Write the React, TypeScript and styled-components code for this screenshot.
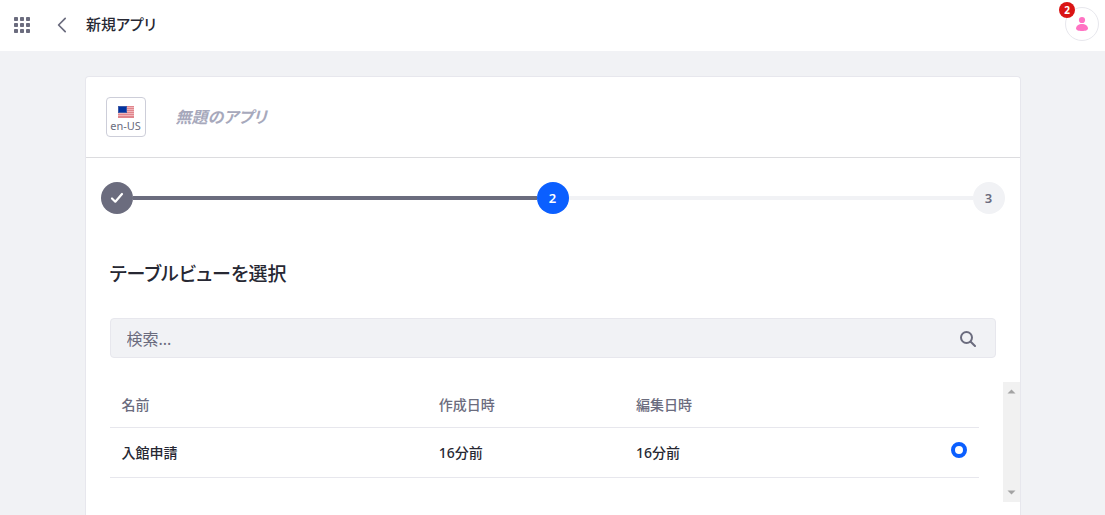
import React from "react";
import styled, { createGlobalStyle } from "styled-components";

const color = {
  dark: "#272833",
  secondary: "#6b6c7e",
  muted: "#a7a9bc",
  light: "#f1f2f5",
  border: "#e7e7ed",
  primary: "#0b5fff",
  danger: "#da1414",
};

const GlobalStyle = createGlobalStyle`
  *, *::before, *::after { box-sizing: border-box; }
  body {
    margin: 0;
    background: ${color.light};
    color: ${color.dark};
    font-family: "Noto Sans", "Noto Sans CJK JP", sans-serif;
    font-feature-settings: "palt";
    font-size: 14px;
    line-height: 20px;
  }
  button, input { font: inherit; font-feature-settings: inherit; color: inherit; }
`;

const Page = styled.div`
  min-height: 100vh;
  display: flex;
  flex-direction: column;
`;

const TopBar = styled.header`
  display: flex;
  align-items: center;
  height: 51px;
  padding: 0 6px 2px;
  background: #fff;
`;

const IconButton = styled.button`
  display: flex;
  align-items: center;
  justify-content: center;
  width: 32px;
  height: 32px;
  padding: 0;
  border: 0;
  background: none;
  color: ${color.secondary};
`;

const BackLink = styled.a`
  display: flex;
  align-items: center;
  justify-content: center;
  width: 32px;
  height: 32px;
  margin-left: 8px;
  color: ${color.secondary};
`;

const PageTitle = styled.h1`
  flex: 1;
  margin: 0 0 0 8px;
  padding-bottom: 2px;
  font-size: 15px;
  font-weight: 500;
  line-height: 24px;
`;

const Avatar = styled.button`
  position: relative;
  display: flex;
  align-items: center;
  justify-content: center;
  width: 34px;
  height: 34px;
  padding: 0;
  margin-bottom: 2px;
  border: 1px solid ${color.border};
  border-radius: 50%;
  background: #fff;
`;

const Badge = styled.span`
  position: absolute;
  top: -6px;
  left: -7px;
  width: 16px;
  height: 16px;
  border-radius: 50%;
  background: ${color.danger};
  color: #fff;
  font-size: 10px;
  font-weight: 700;
  line-height: 16px;
  text-align: center;
`;

const Main = styled.main`
  flex: 1;
  display: flex;
  flex-direction: column;
  width: 100%;
  max-width: 936px;
  margin: 25px auto 0;
`;

const Card = styled.div`
  flex: 1;
  border: 1px solid ${color.border};
  border-bottom: 0;
  border-radius: 4px 4px 0 0;
  background: #fff;
`;

const CardHeader = styled.div`
  display: flex;
  align-items: center;
  gap: 30px;
  padding: 20px;
  border-bottom: 1px solid #dcdcdf;
`;

const LocaleButton = styled.button`
  display: flex;
  flex-direction: column;
  align-items: center;
  justify-content: center;
  gap: 1px;
  width: 40px;
  height: 40px;
  padding: 4px 0 0;
  border: 1px solid #cdced9;
  border-radius: 4px;
  background: #fff;
  color: ${color.secondary};
  font-size: 11px;
  line-height: 14px;
`;

const AppName = styled.input`
  flex: 1;
  min-width: 0;
  height: 40px;
  padding: 0;
  border: 0;
  outline: 0;
  background: none;
  font-size: 16px;
  font-style: italic;
  font-weight: 700;
  &::placeholder { color: ${color.muted}; opacity: 1; }
`;

const Steps = styled.ol`
  display: flex;
  align-items: center;
  margin: 0;
  padding: 24px 15px;
  list-style: none;
`;

type StepState = "done" | "active" | "todo";
const stepBackground = { done: color.secondary, active: color.primary, todo: color.light };

const Step = styled.li<{ $state: StepState }>`
  display: flex;
  align-items: center;
  flex: 1;
  &:last-child { flex: none; }
  &:not(:last-child)::after {
    content: "";
    flex: 1;
    height: 4px;
    background: ${(p) => (p.$state === "done" ? color.secondary : color.light)};
  }
`;

const StepDot = styled.span<{ $state: StepState }>`
  display: flex;
  align-items: center;
  justify-content: center;
  width: 32px;
  height: 32px;
  border-radius: 50%;
  background: ${(p) => stepBackground[p.$state]};
  color: ${(p) => (p.$state === "todo" ? color.secondary : "#fff")};
  font-size: 13px;
  font-weight: 600;
`;

const StepHeading = styled.h2`
  margin: 0;
  padding: 20px 24px 28px;
  font-size: 19px;
  font-weight: 500;
  line-height: 32px;
`;

const SearchBox = styled.form`
  display: flex;
  align-items: center;
  height: 40px;
  margin: 0 24px 24px;
  padding: 2px 11px 0 16px;
  border: 1px solid ${color.border};
  border-radius: 4px;
  background: ${color.light};
`;

const SearchInput = styled.input`
  flex: 1;
  min-width: 0;
  padding: 0;
  border: 0;
  outline: 0;
  background: none;
  font-size: 16px;
  line-height: 24px;
  &::placeholder { color: ${color.secondary}; opacity: 1; }
`;

const ScrollArea = styled.div`
  display: flex;
  gap: 24px;
  height: 120px;
  padding-left: 24px;
`;

const TableWrap = styled.div`
  flex: 1;
`;

const Table = styled.table`
  width: 100%;
  table-layout: fixed;
  border-collapse: separate;
  border-spacing: 0;
`;

const Th = styled.th<{ $width?: string }>`
  width: ${(p) => p.$width ?? "auto"};
  height: 46px;
  padding: 0 12px;
  border-bottom: 1px solid ${color.border};
  color: ${color.secondary};
  font-weight: 500;
  text-align: left;
`;

const Td = styled.td<{ $end?: boolean }>`
  height: 50px;
  padding: 0 12px;
  border-bottom: 1px solid ${color.border};
  font-weight: 500;
  text-align: ${(p) => (p.$end ? "right" : "left")};
`;

const Radio = styled.input`
  appearance: none;
  display: inline-block;
  width: 16px;
  height: 16px;
  margin: 0;
  border: 4px solid ${color.primary};
  border-radius: 50%;
  background: #fff;
`;

const ScrollTrack = styled.div`
  display: flex;
  flex-direction: column;
  justify-content: space-between;
  align-items: center;
  width: 17px;
  padding: 7px 0;
  background: #f1f1f1;
`;

function AppsIcon() {
  return (
    <svg width="16" height="16" viewBox="0 0 16 16" fill="currentColor" aria-hidden="true">
      {[0, 6, 12].map((y) =>
        [0, 6, 12].map((x) => <rect key={`${x}-${y}`} x={x} y={y} width="4" height="4" rx="0.8" />)
      )}
    </svg>
  );
}

function FlagIcon() {
  return (
    <svg width="16" height="12" viewBox="0 0 16 12" aria-hidden="true">
      <rect width="16" height="12" fill="#f0b4b9" />
      {[0, 2, 4, 6, 8, 10].map((y) => (
        <rect key={y} y={y} width="16" height="1" fill="#e0858c" />
      ))}
      <rect y="11" width="16" height="1" fill="#e0858c" />
      <rect width="9" height="7" fill="#3d58a5" />
      <rect x="1" y="1" width="7" height="5" fill="#0033a0" />
    </svg>
  );
}

const columns = [
  { label: "名前", width: "36.5%" },
  { label: "作成日時", width: "22.7%" },
  { label: "編集日時" },
];

const rows = [{ name: "入館申請", created: "16分前", edited: "16分前" }];

export default function App() {
  return (
    <>
      <GlobalStyle />
      <Page>
        <TopBar>
          <IconButton type="button" aria-label="メニュー">
            <AppsIcon />
          </IconButton>
          <BackLink href="#" aria-label="戻る">
            <svg width="10" height="16" viewBox="0 0 10 16" fill="none" stroke="currentColor" strokeWidth="1.7" strokeLinecap="round" strokeLinejoin="round" aria-hidden="true">
              <path d="M8.2 1.3 1.6 8l6.6 6.7" />
            </svg>
          </BackLink>
          <PageTitle>新規アプリ</PageTitle>
          <Avatar type="button" aria-label="ユーザー">
            <svg width="16" height="16" viewBox="0 0 16 16" fill="#ff73c3" aria-hidden="true">
              <circle cx="8" cy="4" r="3.1" />
              <path d="M2 12.6C2 9.9 4.7 8 8 8s6 1.9 6 4.6c0 1.7-2.6 2.5-6 2.5s-6-.8-6-2.5Z" />
            </svg>
            <Badge>2</Badge>
          </Avatar>
        </TopBar>
        <Main>
          <Card>
            <CardHeader>
              <LocaleButton type="button">
                <FlagIcon />
                en-US
              </LocaleButton>
              <AppName type="text" aria-label="アプリ名" placeholder="無題のアプリ" />
            </CardHeader>
            <Steps>
              <Step $state="done">
                <StepDot $state="done">
                  <svg width="14" height="12" viewBox="0 0 14 12" fill="none" stroke="currentColor" strokeWidth="2.2" strokeLinecap="round" strokeLinejoin="round" role="img" aria-label="完了">
                    <path d="M2 6.5 5.3 9.7 12 2" />
                  </svg>
                </StepDot>
              </Step>
              <Step $state="active" aria-current="step">
                <StepDot $state="active">2</StepDot>
              </Step>
              <Step $state="todo">
                <StepDot $state="todo">3</StepDot>
              </Step>
            </Steps>
            <StepHeading>テーブルビューを選択</StepHeading>
            <SearchBox role="search">
              <SearchInput type="text" aria-label="検索" placeholder="検索..." />
              <IconButton type="submit" aria-label="検索を実行">
                <svg width="16" height="16" viewBox="0 0 16 16" fill="none" stroke="currentColor" strokeWidth="2" strokeLinecap="round" aria-hidden="true">
                  <circle cx="6.5" cy="6.5" r="5.5" />
                  <path d="m10.7 10.7 4.3 4.3" />
                </svg>
              </IconButton>
            </SearchBox>
            <ScrollArea>
              <TableWrap>
                <Table>
                  <thead>
                    <tr>
                      {columns.map((c) => (
                        <Th key={c.label} scope="col" $width={c.width}>{c.label}</Th>
                      ))}
                      <Th scope="col" $width="56px" aria-label="選択" />
                    </tr>
                  </thead>
                  <tbody>
                    {rows.map((r) => (
                      <tr key={r.name}>
                        <Td>{r.name}</Td>
                        <Td>{r.created}</Td>
                        <Td>{r.edited}</Td>
                        <Td $end>
                          <Radio type="radio" name="table-view" aria-label={r.name} defaultChecked />
                        </Td>
                      </tr>
                    ))}
                  </tbody>
                </Table>
              </TableWrap>
              <ScrollTrack aria-hidden="true">
                <svg width="9" height="5" viewBox="0 0 9 5" fill="#a3a3a3"><path d="M0.5 4.5 4.5 0.5 8.5 4.5Z" /></svg>
                <svg width="9" height="5" viewBox="0 0 9 5" fill="#a3a3a3"><path d="M0.5 0.5 4.5 4.5 8.5 0.5Z" /></svg>
              </ScrollTrack>
            </ScrollArea>
          </Card>
        </Main>
      </Page>
    </>
  );
}
